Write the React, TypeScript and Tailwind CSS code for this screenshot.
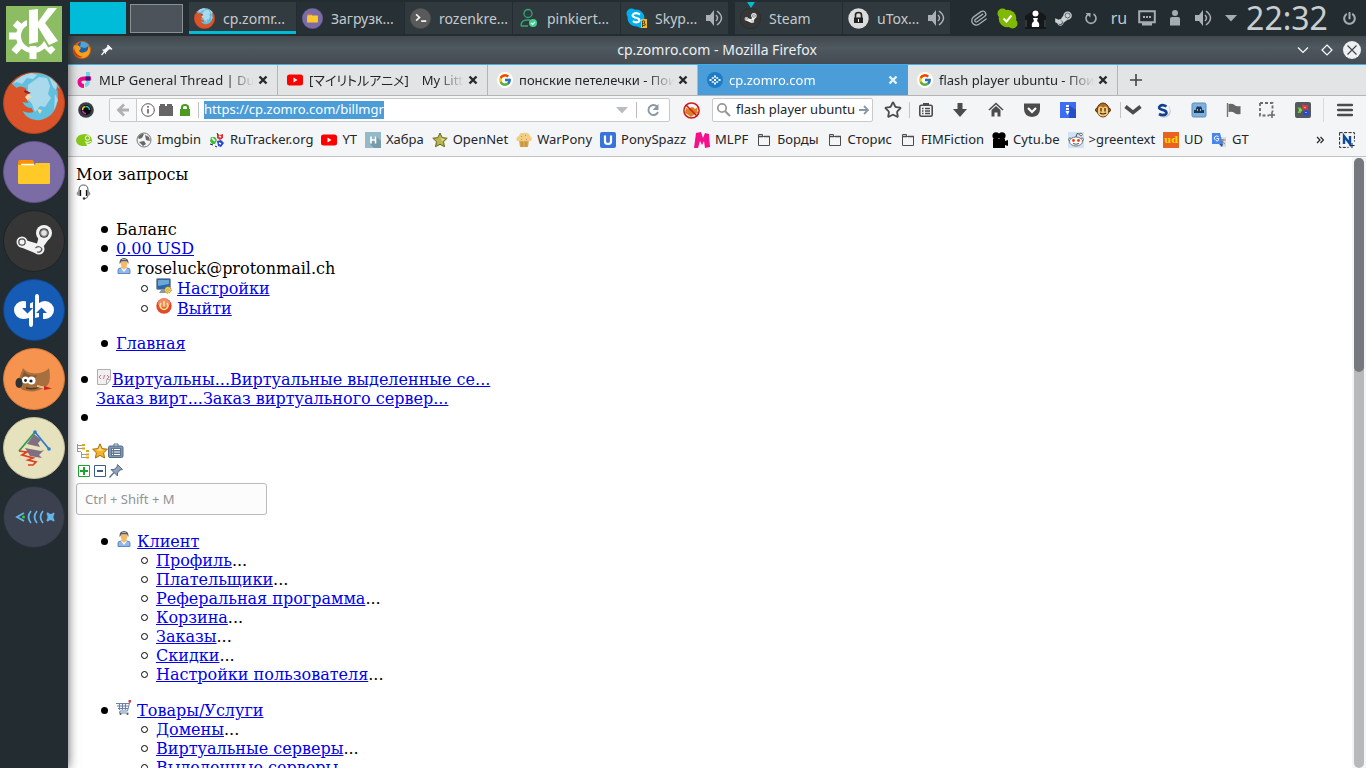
import React from 'react';
import { FaSteamSymbol, FaPowerOff } from 'react-icons/fa';
import { FcGoogle } from 'react-icons/fc';
import { Paperclip, Star } from 'lucide-react';

type SvgProps = { className?: string; box?: string; children: React.ReactNode };

function Svg({ className = 'size-4', box = '0 0 16 16', children }: SvgProps) {
  return (
    <svg className={`${className} shrink-0`} viewBox={box} fill="none" aria-hidden="true">
      {children}
    </svg>
  );
}

/* ---------- Round application icons ---------- */

const discs = {
  firefox: { fill: '#d9542a', edge: '#b8431f' },
  files: { fill: '#7c6ca6', edge: '#63558a' },
  steam: { fill: '#363636', edge: '#222222' },
  qbit: { fill: '#165cb5', edge: '#0f458b' },
  gimp: { fill: '#f6934f', edge: '#d2763a' },
  maps: { fill: '#e6e2bd', edge: '#c3bf99' },
  fish: { fill: '#3b414e', edge: '#2a2f3a' },
  terminal: { fill: '#5a5a5a', edge: '#444444' },
};

type Disc = keyof typeof discs;

function SteamMark({ color }: { color: string }) {
  return (
    <>
      <path d="M17 28.500l17 5 3-11 10 5-8 11-6 5-17-7z" fill={color} />
      <circle cx="41" cy="23" r="8" fill={color} />
      <circle cx="41" cy="23" r="4.800" fill="#363636" />
      <circle cx="41" cy="23" r="3.600" fill={color} />
      <circle cx="41" cy="23" r="3.400" fill="#e4e4e4" stroke="#555" strokeWidth=".8" />
      <circle cx="19" cy="32" r="5.500" fill={color} />
      <circle cx="19" cy="32" r="3.200" stroke="#444" strokeWidth="1.200" />
      <circle cx="36" cy="39" r="5.500" fill={color} />
      <path d="M32.500 38q4-3 6.500 1-1 4-5 3" stroke="#555" strokeWidth="1.200" />
    </>
  );
}

function AppDisc({ kind, className = 'size-[62px]' }: { kind: Disc; className?: string }) {
  const { fill, edge } = discs[kind];
  return (
    <Svg className={className} box="0 0 62 62">
      <circle cx="31" cy="31" r="30.500" fill={fill} stroke={edge} />
      {kind === 'firefox' && (
        <>
          <path
            d="M9 12Q18 1 32 1q17 0 25 16l-3-2-.500 4 1-1q2 18-8 26-7 5-14 4-9-1-13-9 6 3 11 1l-2-4q-6 0-9-6l6 1q-2-3 0-6l-3-9q-6-3-9 0z"
            fill="#62c0df"
          />
          <path d="M9 12Q18 2 29 1l5 2-4 4-6-1-5 6-5-2zM25 13l11-8 8 1 3 8-2 8 3 4-6 9-5-1-5 6-3-8-4-5z" fill="#a9d9eb" />
          <path d="m46 5 8 7-1 6-3-3zM52 22l3 6-4 10z" fill="#a9d9eb" />
          <path d="m25 22 4 3-3 1-1 3-3-4zM34 37l5 1-2 4z" fill="#f6d9ac" />
          <path d="m22 18 6 3-3 1-4-2z" fill="#9c1c1c" />
        </>
      )}
      {kind === 'files' && (
        <>
          <path d="M15 22q0-3 2-3h12q2 0 2 3v3H15z" fill="#ff8f00" />
          <path d="M15 24h16l2-2h13q1 0 1 1v19q0 1-1 1H16q-1 0-1-1z" fill="#ffca28" />
          <path d="M18 23.5h13" stroke="#fff" strokeWidth="1.5" />
        </>
      )}
      {kind === 'steam' && <SteamMark color="#f2f2f2" />}
      {kind === 'qbit' && (
        <>
          <path d="M30 23v22q0 3-2 3t-2-3v-6q-3 1-6 1a9 9 0 0 1 0-18q5 0 6 3z" fill="#fff" />
          <path d="M32 39V18q0-3 2-3t2 3v6q3-2 6-2a9 9 0 0 1 0 18q-5 0-6-2z" fill="#fff" />
          <path d="M23 22v7h-4l5.500 5.500L30 29h-3v-7zM36 40v-6h-3l5.500-5.500L44 34h-4v6z" fill="#165cb5" />
        </>
      )}
      {kind === 'gimp' && (
        <>
          <path d="M20 20q5 7 17 5 7-2 9-5 3 16-4 19-10 7-22 3-7-4-5-9z" fill="#a66f3d" />
          <path d="M21 23q4 6 13 4l-4 7-11-4z" fill="#85552b" />
          <ellipse cx="16" cy="35" rx="3.500" ry="5" fill="#2d3234" />
          <circle cx="22.500" cy="32" r="3.500" fill="#fff" />
          <circle cx="28.500" cy="32.500" r="4" fill="#fff" />
          <circle cx="22.500" cy="32.500" r="1.400" fill="#222" />
          <circle cx="28" cy="33" r="1.600" fill="#222" />
          <path d="M23 40q9 2 15-2" stroke="#503722" strokeWidth="1.500" />
          <path d="m34 38 9 2" stroke="#e7c088" strokeWidth="2" />
          <path d="m41 38 8 2.500-8 1.500z" fill="#cf2323" />
        </>
      )}
      {kind === 'maps' && (
        <>
          <path d="m31 17 7 6-3 3 2 4-13-3zM22 31l16 3 3-1-5 5 3 3-12-2z" fill="#806f80" />
          <path d="m16 34 16-19" stroke="#2e9c4e" strokeWidth="1.800" />
          <path d="m32 15 14 17" stroke="#3079ce" strokeWidth="1.800" />
          <circle cx="32" cy="15" r="1.800" fill="#3079ce" />
          <circle cx="46" cy="32" r="1.800" fill="#3079ce" />
          <path d="m16 34 8 1-5 3 11 3-5 2 8 2-3 3h-5" stroke="#df3d24" strokeWidth="1.700" />
        </>
      )}
      {kind === 'fish' && (
        <g stroke="#62b6ec" strokeWidth="1.800">
          <path d="m21 27-7 4 7 4M28 25q-5 6 0 12M34 25q-5 6 0 12M40 25q-5 6 0 12M44 27q4 4 7 0M44 35q4-4 7 0M44 27q3 4 0 8M51 27q-3 4 0 8M45 28l5 6M50 28l-5 6" />
          <circle cx="20.500" cy="31" r="1.500" fill="#3c3" stroke="none" />
        </g>
      )}
      {kind === 'terminal' && <path d="m18 19 10 9-10 9M33 39h15" stroke="#f1f1f1" strokeWidth="5" />}
    </Svg>
  );
}

/* ---------- Task and tray glyphs ---------- */

function Speaker() {
  return (
    <Svg className="size-[18px]" box="0 0 18 18">
      <path d="M1 6h4l4-5v16l-4-5H1z" fill="#a9b1b5" />
      <path d="M11 6q3 3 0 6M12 2q9 7 0 14" stroke="#a9b1b5" strokeWidth="1.500" />
    </Svg>
  );
}

function ContactIcon() {
  return (
    <Svg className="size-[21px]" box="0 0 21 21">
      <circle cx="10" cy="5.500" r="4" stroke="#35a876" strokeWidth="1.300" />
      <path d="M3 18q0-6 6-6h3M3 18h7" stroke="#35a876" strokeWidth="1.300" />
      <circle cx="15" cy="15" r="4" fill="#3fcf90" />
      <path d="m13 15 1.500 1.500L17 14" stroke="#fff" strokeWidth="1.200" />
    </Svg>
  );
}

function SkypeIcon() {
  return (
    <Svg className="size-[21px]" box="0 0 21 21">
      <circle cx="10" cy="10" r="8.500" fill="#00aff0" />
      <circle cx="5.500" cy="5.500" r="5" fill="#00aff0" />
      <circle cx="15" cy="15" r="5" fill="#00aff0" />
      <path d="M14 6.500Q10 4 7.500 6T9 9.500l3 1q3 2 0 3.500-3 1-5-1" stroke="#fff" strokeWidth="2.200" />
      <path d="M15 11h6v9h-6z" fill="#f4b927" />
      <path d="M16.500 19v-6q2-1 2.500 1l-1.500 1.500q3 0 1.500 2h-2" stroke="#664400" />
    </Svg>
  );
}

function UToxIcon() {
  return (
    <Svg className="size-[21px]" box="0 0 21 21">
      <circle cx="10.500" cy="10.500" r="10.200" fill="#dcdcdc" />
      <path d="M6 9.500h9V15H6z" fill="#222" />
      <path d="M7.500 10V7q0-2.500 3-2.500t3 2.500v3" stroke="#222" strokeWidth="1.600" />
      <path d="M10.500 11v3" stroke="#fff" />
    </Svg>
  );
}

type Task = { label: string; icon: React.ReactNode; tone: string; audio?: boolean; active?: boolean; marked?: boolean };

const windows: Task[] = [
  { label: 'cp.zomr...', icon: <AppDisc kind="firefox" className="size-[21px]" />, tone: 'bg-[#323b40]', active: true },
  { label: 'Загрузк...', icon: <AppDisc kind="files" className="size-[21px]" />, tone: 'bg-[#273135]' },
  { label: 'rozenkre...', icon: <AppDisc kind="terminal" className="size-[21px]" />, tone: 'bg-[#30393e]' },
  { label: 'pinkiert...', icon: <ContactIcon />, tone: 'bg-[#30393e]' },
  { label: 'Skyp...', icon: <SkypeIcon />, tone: 'bg-[#30393e]', audio: true },
];

const pinned: Task[] = [
  { label: 'Steam', icon: <AppDisc kind="steam" className="size-[21px]" />, tone: 'bg-[#30393e]', marked: true },
  { label: 'uTox...', icon: <UToxIcon />, tone: 'bg-[#30393e]', audio: true },
];

function TaskButton({ task }: { task: Task }) {
  return (
    <button
      className={`relative flex h-8 w-[107px] shrink-0 items-center gap-2 px-[5px] text-[14px] whitespace-nowrap text-[#c5cacc] ${task.tone}`}
    >
      {task.icon}
      <span className="flex-1 text-left">{task.label}</span>
      {task.audio && <Speaker />}
      {task.active && <span className="absolute inset-x-0 bottom-0 h-[3px] bg-[#00bcd4]" />}
      {task.marked && (
        <Svg className="absolute top-0 left-3 h-[6px] w-2" box="0 0 8 6">
          <path d="M0 0h8L4 6z" fill="#00bcd4" />
        </Svg>
      )}
    </button>
  );
}

const tray: { name: string; icon: React.ReactNode }[] = [
  { name: 'Clipboard', icon: <Paperclip className="size-[18px] rotate-[10deg] text-[#a5adb1]" strokeWidth={1.8} /> },
  {
    name: 'Skype status',
    icon: (
      <Svg className="size-[21px]" box="0 0 21 21">
        <circle cx="10.500" cy="10.500" r="8.800" fill="#7fba00" />
        <circle cx="5.500" cy="5.500" r="5" fill="#7fba00" />
        <circle cx="15.500" cy="15.500" r="5" fill="#7fba00" />
        <path d="m6.500 10.500 3 3 5-6" stroke="#fff" strokeWidth="2" />
      </Svg>
    ),
  },
  {
    name: 'Messenger',
    icon: (
      <Svg className="size-[21px]" box="0 0 21 21">
        <path d="M0 8q4-3 6-4 4-5 9 0 3 1 6 4v13H0z" fill="#14181a" />
        <circle cx="10.500" cy="5.500" r="3" fill="#fff" />
        <path d="M8 10h5l-1 3q3 2 2 6H7q-1-4 2-6z" fill="#fff" />
        <path d="M1 12v7M20 12v7" stroke="#555" />
      </Svg>
    ),
  },
  { name: 'Steam', icon: <FaSteamSymbol className="size-[19px] text-[#cdd1d3]" /> },
  {
    name: 'Updates',
    icon: (
      <Svg className="size-[14px]" box="0 0 14 14">
        <path d="M9.500 3a5 5 0 1 1-5 0" stroke="#a5adb1" strokeWidth="1.600" />
        <path d="M1.500 2h5v4.500z" fill="#a5adb1" />
      </Svg>
    ),
  },
  { name: 'Layout', icon: <span className="text-[16px] text-[#c5cacc]">ru</span> },
  {
    name: 'Keyboard',
    icon: (
      <Svg className="size-[18px]" box="0 0 18 18">
        <path d="M1.200 2.200h15.600v11H1.200z" stroke="#a5adb1" strokeWidth="2" />
        <path d="M4 14h10v2.500H4zM5 7h2v2H5zM8 7h2v2H8zM11 7h2v2h-2z" fill="#a5adb1" />
      </Svg>
    ),
  },
  {
    name: 'User',
    icon: (
      <Svg className="size-[18px]" box="0 0 18 18">
        <circle cx="9" cy="4" r="3" fill="#a5adb1" />
        <path d="M4 16.500V9.500q0-1.500 2-1.500h6q2 0 2 1.500v7z" fill="#a5adb1" />
      </Svg>
    ),
  },
  { name: 'Volume', icon: <Speaker /> },
  {
    name: 'More',
    icon: (
      <Svg className="h-[7px] w-3" box="0 0 12 7">
        <path d="M0 0h12L6 6.500z" fill="#a5adb1" />
      </Svg>
    ),
  },
];

function Taskbar() {
  return (
    <header className="relative z-20 flex h-9 shrink-0 items-center bg-[#232d31] pl-[2px]">
      <button aria-label="Desktop 1" className="h-8 w-14 shrink-0 bg-[#00bcd9]" />
      <button aria-label="Desktop 2" className="ml-1 h-[29px] w-[53px] shrink-0 border border-[#8b9095] bg-[#4d535b]" />
      <nav className="ml-[6px] flex gap-px">
        {windows.map((t) => (
          <TaskButton key={t.label} task={t} />
        ))}
      </nav>
      <nav className="ml-[7px] flex gap-px">
        {pinned.map((t) => (
          <TaskButton key={t.label} task={t} />
        ))}
      </nav>
      <div className="ml-auto flex items-center">
        {tray.map((t) => (
          <button key={t.name} aria-label={t.name} className="flex h-8 w-7 items-center justify-center">
            {t.icon}
          </button>
        ))}
        <time className="w-[84px] text-center text-[32px] leading-9 text-[#c9ced1]">22:32</time>
        <button aria-label="Power" className="mr-2 ml-[11px] flex size-[18px] items-center justify-center text-[#a5adb1]">
          <FaPowerOff className="size-[13px]" />
        </button>
      </div>
    </header>
  );
}

function Dock() {
  const apps: Disc[] = ['firefox', 'files', 'steam', 'qbit', 'gimp', 'maps', 'fish'];
  return (
    <aside className="z-10 flex w-[68px] shrink-0 flex-col items-center bg-[#232d31] pt-[6px] shadow-[0_0_10px_rgba(0,0,0,0.65)]">
      <button aria-label="KDE" className="mb-[10px] flex size-14 shrink-0 items-center justify-center bg-[#8cbd62]">
        <Svg className="size-14" box="0 0 56 56">
          <path d="M27 40v13M15 38l-7 8M39 38l8 8M13 30H3M15 22l-6-5" stroke="#fff" strokeWidth="7" />
          <circle cx="27" cy="30" r="14.500" stroke="#fff" strokeWidth="5" />
          <path d="M23 4l9-1v13L42 2h9L39 17l13 18-9 4-11-18v15l-9 2z" fill="#8cbd62" stroke="#8cbd62" strokeWidth="4" />
          <path d="M23 4l9-1v13L42 2h9L39 17l13 18-9 4-11-18v15l-9 2z" fill="#fff" />
        </Svg>
      </button>
      <nav className="flex flex-col gap-[7px]">
        {apps.map((a) => (
          <button key={a} aria-label={a}>
            <AppDisc kind={a} />
          </button>
        ))}
      </nav>
    </aside>
  );
}

/* ---------- Firefox window ---------- */

function TitleBar() {
  return (
    <div className="grid h-7 shrink-0 grid-cols-[1fr_auto_1fr] items-center bg-linear-to-b from-[#42494f] via-[#4e585f] via-40% to-[#454c53] px-1 text-[#eceff1]">
      <div className="flex items-center gap-2">
        <Svg className="size-5" box="0 0 20 20">
          <circle cx="10" cy="10" r="9" fill="#e66000" />
          <path d="M6 4q5-5 10 1 3 5-1 9-5 2-8-2z" fill="#1e5fa8" />
          <path d="M9 2q5-1 8 4l-4 2-5-1z" fill="#4fa3dc" />
          <path d="M2 5q2 1 3 0l2 1 2 2-2 3q2 3 6 1 4-1 3-6l2 3q0 8-7 9Q1 18 1 9z" fill="#f9a01b" />
          <path d="M2 8q1 7 9 9-8 2-10-6z" fill="#d33f12" />
        </Svg>
        <button aria-label="Keep above">
          <Svg className="size-[14px]" box="0 0 14 14">
            <path d="m8 2 4 4-3 .6-3 3 0 2-4-5h2l3-2.500z" fill="#f4f6f7" />
            <path d="m5 8-3.500 4M7.500 2l4.500 4.500" stroke="#f4f6f7" strokeWidth="1.300" />
          </Svg>
        </button>
      </div>
      <h1 className="text-[14px] leading-5">cp.zomro.com - Mozilla Firefox</h1>
      <div className="flex items-center justify-end gap-[6px]">
        <button aria-label="Minimize">
          <Svg className="size-[18px]" box="0 0 18 18">
            <path d="m4 6.500 5 5 5-5" stroke="#fff" strokeWidth="1.200" />
          </Svg>
        </button>
        <button aria-label="Maximize">
          <Svg className="size-[18px]" box="0 0 18 18">
            <path d="m9 4 5 5-5 5-5-5z" stroke="#fff" strokeWidth="1.200" />
          </Svg>
        </button>
        <button aria-label="Close">
          <Svg className="size-5" box="0 0 20 20">
            <circle cx="10" cy="10" r="9" fill="#eff0f1" />
            <path d="m5.500 5.500 9 9m0-9-9 9" stroke="#3f474d" strokeWidth="1.200" />
          </Svg>
        </button>
      </div>
    </div>
  );
}

function GoogleBadge() {
  return (
    <span className="flex size-4 shrink-0 items-center justify-center rounded-full bg-white">
      <FcGoogle className="size-[14px]" />
    </span>
  );
}

function YoutubeBadge() {
  return (
    <Svg>
      <rect x="0" y="2.500" width="16" height="11" rx="2.500" fill="#f00" />
      <path d="m6.500 5.500 4 2.500-4 2.500z" fill="#fff" />
    </Svg>
  );
}

const tabs: { title: string; icon: React.ReactNode; active?: boolean }[] = [
  {
    title: 'MLP General Thread | Dubs',
    icon: (
      <Svg>
        <path d="M9 0h4v5H9z" fill="#6fd2e6" />
        <path d="M11 4v6q0 3-3 3" stroke="#6fd2e6" strokeWidth="3.500" />
        <path d="M14 6.500H7Q2 7 2.500 10.500T7 14" stroke="#ec0a8c" strokeWidth="4" />
        <path d="M8.500 4.500H13v4H8.500z" fill="#46127a" />
      </Svg>
    ),
  },
  { title: '[マイリトルアニメ]\u3000My Little Pony', icon: <YoutubeBadge /> },
  { title: 'понские петелечки - Поиск', icon: <GoogleBadge /> },
  {
    title: 'cp.zomro.com',
    active: true,
    icon: (
      <Svg>
        <circle cx="8" cy="8" r="8" fill="#1e7cc4" />
        <path d="M7 3.500h2v2H7zM7 10.500h2v2H7zM2.500 7h2v2h-2zM11.500 7h2v2h-2zM7 7h2v2H7zM4.800 5.200h2v1.500h-2zM9.200 5.200h2v1.500h-2zM4.800 9.300h2v1.500h-2zM9.200 9.300h2v1.500h-2z" fill="#fff" />
      </Svg>
    ),
  },
  { title: 'flash player ubuntu - Поиск', icon: <GoogleBadge /> },
];

function TabStrip() {
  return (
    <div className="flex h-[32px] shrink-0 border-t border-b border-t-[#3daee9] border-b-[#b4b5b6] bg-[#e3e4e6]">
      {tabs.map((tab) => (
        <div
          key={tab.title}
          className={`flex min-w-0 basis-[210px] items-center border-r pr-[9px] pl-[9px] ${
            tab.active ? 'border-r-[#4a9dd9] bg-[#4a9dd9] text-white' : 'border-r-[#b4b5b6] text-[#232629]'
          }`}
        >
          {tab.icon}
          <button className="ml-[6px] min-w-0 flex-1 overflow-hidden text-left text-[13px] leading-5 whitespace-nowrap [font-feature-settings:'palt'] [mask-image:linear-gradient(to_right,black_83%,transparent)]">
            {tab.title}
          </button>
          <button aria-label={`Close ${tab.title}`} className="ml-1">
            <Svg className="size-[10px]" box="0 0 10 10">
              <path d="m1.500 1.500 7 7m0-7-7 7" stroke={tab.active ? '#e6f2fb' : '#26292c'} strokeWidth="2.400" />
            </Svg>
          </button>
        </div>
      ))}
      <button aria-label="New tab" className="flex w-9 items-center justify-center">
        <Svg className="size-3" box="0 0 12 12">
          <path d="M6 0v12M0 6h12" stroke="#444" strokeWidth="1.600" />
        </Svg>
      </button>
    </div>
  );
}

const dark = '#4c4c4c';

function ToolButton({ label, className = 'w-9', children }: { label: string; className?: string; children: React.ReactNode }) {
  return (
    <button aria-label={label} className={`flex h-6 shrink-0 items-center justify-center ${className}`}>
      {children}
    </button>
  );
}

function NavBar() {
  return (
    <div className="flex h-7 shrink-0 items-center bg-[#f4f5f7]">
      <ToolButton label="Camera" className="mr-[5px] w-9">
        <Svg>
          <circle cx="8" cy="8" r="7.800" fill="#3a3e42" />
          <circle cx="8" cy="8" r="5" fill="#0b0b0d" />
          <path d="M4.500 8a3.500 3.500 0 0 1 3-3.500" stroke="#e0d030" strokeWidth="1.500" />
          <path d="M8 4.500A3.500 3.500 0 0 1 11.500 8" stroke="#27c4c8" strokeWidth="1.500" />
          <path d="M4.500 8.500A3.500 3.500 0 0 0 8 11.500" stroke="#d02ccc" strokeWidth="1.500" />
        </Svg>
      </ToolButton>
      <div className="flex h-6 flex-1 items-center rounded-xs border border-[#c8c9cb] bg-white">
        <button aria-label="Back" className="flex h-full w-[27px] items-center justify-center border-r border-[#c8c9cb] bg-[#f7f8f9]">
          <Svg className="size-[14px]" box="0 0 14 14">
            <path d="M13 7H3M8 1.500 2.500 7 8 12.500" stroke="#b0b0b0" strokeWidth="2.800" />
          </Svg>
        </button>
        <button aria-label="Site information" className="ml-1 flex items-center gap-[3px]">
          <Svg className="size-[14px]" box="0 0 14 14">
            <circle cx="7" cy="7" r="6.300" stroke="#555" />
            <path d="M7 6v4.500M7 3v1.700" stroke="#555" strokeWidth="1.500" />
          </Svg>
          <Svg>
            <path d="M1 4h1V2h5v2h2V2h5v2h1v10H1z" fill="#666" />
          </Svg>
          <Svg>
            <path d="M3 7h10v7H3z" fill="#4b9a22" />
            <path d="M5 8V5.500Q5 3 8 3t3 2.500V8" stroke="#4b9a22" strokeWidth="2.200" />
          </Svg>
        </button>
        <span className="mx-[5px] h-4 w-px bg-[#c0c0c0]" />
        <input
          aria-label="Address"
          defaultValue="https://cp.zomro.com/billmgr"
          className="field-sizing-content h-[18px] bg-[#4a9dd9] text-[13px] text-white outline-none"
        />
        <button aria-label="Show history" className="ml-auto px-2">
          <Svg className="h-[7px] w-3" box="0 0 12 7">
            <path d="M0 0h12L6 6.500z" fill="#b9bcbf" />
          </Svg>
        </button>
        <span className="h-4 w-px bg-[#bcbcbc]" />
        <button aria-label="Reload" className="flex w-8 justify-center">
          <Svg className="size-[14px]" box="0 0 14 14">
            <path d="M11 3.500A5 5 0 1 0 12 9" stroke="#8a98a5" strokeWidth="1.900" />
            <path d="M12.500 1v6h-6z" fill="#8a98a5" />
          </Svg>
        </button>
      </div>
      <ToolButton label="Block content" className="w-[42px]">
        <Svg className="size-[17px]" box="0 0 17 17">
          <path d="m3 6 3 1q3-4 6 0l3-2-1 4 2 2-4 1-4 3-4-3-2-1z" fill="#d88024" />
          <circle cx="8.500" cy="8.500" r="7.600" stroke="#d41818" strokeWidth="1.500" />
          <path d="m3 3 11 11" stroke="#d41818" strokeWidth="1.500" />
        </Svg>
      </ToolButton>
      <div className="flex h-6 w-[161px] shrink-0 items-center rounded-xs border border-[#c8c9cb] bg-white px-[3px]">
        <Svg>
          <circle cx="6" cy="6" r="4.200" stroke="#999" strokeWidth="1.800" />
          <path d="m9 9 5 5" stroke="#999" strokeWidth="2.200" />
        </Svg>
        <input aria-label="Search" defaultValue="flash player ubuntu" className="ml-1 min-w-0 flex-1 bg-transparent text-[13px] text-[#232629] outline-none" />
        <button aria-label="Go">
          <Svg className="size-[10px]" box="0 0 10 10">
            <path d="M0 5h8M5 1l4 4-4 4" stroke="#8a98a5" strokeWidth="1.800" />
          </Svg>
        </button>
      </div>
      <ToolButton label="Bookmark this page" className="ml-1 w-8">
        <Star className="size-[18px]" color={dark} strokeWidth={2.4} />
      </ToolButton>
      <span className="h-4 w-px bg-[#c4c5c7]" />
      <ToolButton label="Bookmarks" className="w-8">
        <Svg>
          <rect x="1.800" y="3.300" width="12.400" height="11" rx="1.500" stroke={dark} strokeWidth="1.600" />
          <path d="M5 1h6v3H5z" fill={dark} />
          <path d="M4 6.500h1.500M7 6.500h5M4 9h1.500M7 9h5M4 11.500h1.500M7 11.500h5" stroke={dark} strokeWidth="1.300" />
        </Svg>
      </ToolButton>
      <ToolButton label="Downloads">
        <Svg>
          <path d="M5.500 1h5v6H15l-7 8-7-8h4.500z" fill={dark} />
        </Svg>
      </ToolButton>
      <ToolButton label="Home">
        <Svg>
          <path d="m1 8 7-6.500L15 8" stroke={dark} strokeWidth="1.600" />
          <path d="m3.500 8 4.500-4 4.500 4v6.500h-3v-4h-3v4h-3z" fill={dark} />
        </Svg>
      </ToolButton>
      <ToolButton label="Pocket">
        <Svg>
          <path d="M0 1.500h16V7q0 7-8 8Q0 14 0 7z" fill={dark} />
          <path d="m4 6 4 4 4-4" stroke="#fff" strokeWidth="2.200" />
        </Svg>
      </ToolButton>
      <ToolButton label="Archive">
        <Svg>
          <path d="M0 0h16v16H0z" fill="#3d6df2" />
          <path d="m9 3 7 5v8H9z" fill="#2850c4" />
          <path d="M6 3h3v2H6zM6 6h3v2H6zM5.500 9h4L7.500 13z" fill="#fff" />
        </Svg>
      </ToolButton>
      <ToolButton label="Monkey" className="w-[34px]">
        <Svg>
          <circle cx="2.500" cy="8" r="2" fill="#c9893b" stroke="#56300f" />
          <circle cx="13.500" cy="8" r="2" fill="#c9893b" stroke="#56300f" />
          <ellipse cx="8" cy="8" rx="6" ry="7" fill="#b06d22" stroke="#56300f" />
          <path d="M3 8q0-4 3-3.500l2 1 2-1q3-.500 3 3.500 1 6-5 6.500Q2 14 3 8z" fill="#f6c777" />
          <path d="M6 6v3.500M10 6v3.500M5 11q3 2 6 0" stroke="#33200f" strokeWidth="1.200" />
        </Svg>
      </ToolButton>
      <span className="h-4 w-px bg-[#c4c5c7]" />
      <ToolButton label="Scripts" className="w-6">
        <Svg className="size-[18px]" box="0 0 18 18">
          <path d="m1.500 5.500 7.500 6 7.500-6" stroke={dark} strokeWidth="3.600" />
        </Svg>
      </ToolButton>
      <ToolButton label="Stylish">
        <Svg>
          <circle cx="9" cy="9" r="6.800" fill="#c3c8ce" />
          <circle cx="8" cy="8" r="6.800" fill="#f2f5f9" />
          <path d="M11.500 4.500Q7.500 2 5 4T6.500 7.500l3 1q3.500 2 1 4-3 1.500-6.500-.500" stroke="#11418e" strokeWidth="2.600" />
        </Svg>
      </ToolButton>
      <ToolButton label="Robot" className="w-[35px]">
        <Svg>
          <rect x="1" y="1" width="14" height="14" rx="1.500" fill="#7fb1de" stroke="#5d8dbc" />
          <path d="M3 11V8h2V6q1-2 3-2t3 2v2h2v3z" fill="#203552" />
          <path d="M6.500 7v2M9.500 7v2M8 3v2" stroke="#8cbce6" />
        </Svg>
      </ToolButton>
      <ToolButton label="Flag" className="w-[35px]">
        <Svg>
          <path d="M1.500 1v14" stroke="#777" strokeWidth="1.400" />
          <path d="M2.500 2q4-1 6 1t6 1v8q-4 1-6-1t-6-1z" fill="#666" />
        </Svg>
      </ToolButton>
      <ToolButton label="Screenshot" className="w-8">
        <Svg>
          <path d="M1 1h12.500v9M1 1v12.500h9" stroke="#6b6b6b" strokeWidth="1.800" strokeDasharray="3 2" />
          <path d="M13 10v6M10 13h6" stroke="#6b6b6b" strokeWidth="1.600" />
        </Svg>
      </ToolButton>
      <ToolButton label="Color nodes" className="w-10">
        <Svg>
          <rect width="16" height="16" rx="2" fill="#55585c" />
          <path d="M2.500 5.500h3l2 2.500-2 3h-3L4 8z" fill="#61ce32" />
          <path d="m8 2 2 1.500 3-.500-.500 3 .500 2-3-.500L8 8 7 5z" fill="#f03447" />
          <path d="m8 10 2-.500 1-2 2 2 1.500.500-1 2-.500 2-2-1-2 1z" fill="#2647dd" />
          <path d="M4.500 8h1M9.500 5.500h1M10.500 10.500h1" stroke="#fff" />
        </Svg>
      </ToolButton>
      <span className="h-6 w-px bg-[#d9dadc]" />
      <ToolButton label="Menu" className="w-[42px]">
        <Svg>
          <path d="M1 3h14M1 8h14M1 13h14" stroke={dark} strokeWidth="2.400" strokeLinecap="round" />
        </Svg>
      </ToolButton>
    </div>
  );
}

function FolderOutline() {
  return (
    <Svg>
      <path d="M2.500 13.500v-11h4v2h7v9z" stroke={dark} />
      <path d="M2 4.500h5M8 4.500h6" stroke={dark} strokeWidth="1.500" />
    </Svg>
  );
}

const bookmarks: { label: string; icon: React.ReactNode }[] = [
  {
    label: 'SUSE',
    icon: (
      <Svg>
        <path d="M0 8q1-6 9-6 7 1 7 7 0 2-3 3l-3-1 1 3H6q-6-1-6-6z" fill="#86c81a" />
        <circle cx="11.500" cy="6" r="2.200" stroke="#fff" />
        <path d="M9 10q3 1 6-.500" stroke="#fff" />
      </Svg>
    ),
  },
  {
    label: 'Imgbin',
    icon: (
      <Svg>
        <circle cx="8" cy="8" r="7" fill="#f3f3f3" stroke="#777" />
        <path d="M2 5q3-4 6-3l-2 4-3 1zM9 3l4 2 1 4-4-1zM3 10l5-1 2 3-3 2z" fill="#686868" />
      </Svg>
    ),
  },
  {
    label: 'RuTracker.org',
    icon: (
      <Svg>
        <path d="M2 5h4l2 3-2 4H3L1 9z" fill="#42b93d" />
        <path d="m8 2 3 1 3-1v4l-3 2-3-2z" fill="#e52a2f" />
        <path d="m8 9 4-1 3 3-3 4-3-1z" fill="#2346d2" />
        <path d="M3 6l3 3M10 4l2 1M10 11l2 1" stroke="#fff" strokeWidth="1.500" />
        <path d="M8 1l1 2M1 12l3 1M6 14l2 1" stroke="#222" />
      </Svg>
    ),
  },
  { label: 'YT', icon: <YoutubeBadge /> },
  {
    label: 'Хабра',
    icon: (
      <Svg>
        <path d="M0 0h16v16H0z" fill="#93bac6" />
        <path d="m11 4 5 5v7H9L5 12z" fill="#789ba9" />
        <path d="M6 4.500v7M10.500 4.500v7M6 8h4" stroke="#fff" strokeWidth="1.600" />
      </Svg>
    ),
  },
  {
    label: 'OpenNet',
    icon: (
      <Svg>
        <path d="m8 1 2.200 4.600 5 .6-3.700 3.500 1 5L8 12.300 3.500 14.700l1-5L.8 6.200l5-.6z" fill="#b8b552" stroke="#66651b" />
        <path d="m8 3 1.500 3.500 3 .5-2.500 2z" fill="#e7e5a0" />
      </Svg>
    ),
  },
  {
    label: 'WarPony',
    icon: (
      <Svg>
        <path d="M3 8h10l-1 7H4z" fill="#d7a54b" />
        <path d="M1 9Q-1 5 3 4q1-4 5-3 5-1 6 3 3 2 1 5z" fill="#f0ce84" />
        <path d="M6 10v5M10 10v5M5 4l1 1M9 3l1 1M10 7l1 1M5 8l1-1" stroke="#b98534" strokeWidth=".8" />
      </Svg>
    ),
  },
  {
    label: 'PonySpazz',
    icon: (
      <Svg>
        <rect width="16" height="16" rx="2" fill="#3b74d8" />
        <path d="M5 3.500v6Q5 12 8 12t3-2.500v-6" stroke="#fff" strokeWidth="2.200" />
      </Svg>
    ),
  },
  {
    label: 'MLPF',
    icon: (
      <Svg>
        <path d="m0 16 2-15 5-1 2 6 2-5 4 1 1 13-5 1-1-7-2 4-2-4-2 7z" fill="#f5108c" />
      </Svg>
    ),
  },
  { label: 'Борды', icon: <FolderOutline /> },
  { label: 'Сторис', icon: <FolderOutline /> },
  { label: 'FIMFiction', icon: <FolderOutline /> },
  {
    label: 'Cytu.be',
    icon: (
      <Svg>
        <circle cx="4" cy="3.800" r="3.600" fill="#000" />
        <circle cx="10" cy="3.800" r="3.600" fill="#000" />
        <path d="M1 7h12v2l3-1v6l-3-1v3H1z" fill="#000" />
      </Svg>
    ),
  },
  {
    label: '>greentext',
    icon: (
      <Svg>
        <path d="M0 0h16v16H0z" fill="#cfe3f7" />
        <path d="m8 5 1-3.500 3 .7" stroke="#555" />
        <circle cx="13" cy="2.500" r="1.300" fill="#fff" stroke="#555" strokeWidth=".8" />
        <circle cx="2" cy="7.500" r="1.500" fill="#fff" stroke="#555" strokeWidth=".8" />
        <circle cx="14" cy="7.500" r="1.500" fill="#fff" stroke="#555" strokeWidth=".8" />
        <ellipse cx="8" cy="9.500" rx="6.500" ry="4.500" fill="#fff" stroke="#555" strokeWidth=".8" />
        <circle cx="5.500" cy="8.500" r="1.400" fill="#f33a16" />
        <circle cx="10.500" cy="8.500" r="1.400" fill="#f33a16" />
        <path d="M5 11.500q3 1.500 6 0" stroke="#555" />
      </Svg>
    ),
  },
  {
    label: 'UD',
    icon: (
      <span
        className="flex size-4 items-center justify-center bg-[#e86222] font-['DejaVu_Serif',serif] text-[10px] leading-4 font-bold text-[#ffd600]"
        aria-hidden="true"
      >
        ud
      </span>
    ),
  },
  {
    label: 'GT',
    icon: (
      <Svg>
        <path d="M7 5h8v10H9z" fill="#dcdcdc" />
        <path d="M1 1h8l3 11H1z" fill="#4a86e8" />
        <path d="M7.500 4.500Q5 3 3.700 5T5 8.500t2.700-2H5.500" stroke="#fff" />
        <path d="M10 8h4.500M12 7v1q0 3-2 4M11 9q1 2 3 3" stroke="#777" strokeWidth=".8" />
        <path d="m8 12 3 3 1-3z" fill="#2457b5" />
      </Svg>
    ),
  },
];

function BookmarksBar() {
  return (
    <nav className="flex h-[33px] shrink-0 items-center border-b border-[#c3c4c5] bg-[#f4f5f7] pr-[11px] pl-2 text-[13px] text-[#232629]">
      <div className="flex flex-1 gap-2">
        {bookmarks.map((b) => (
          <a key={b.label} href="#" className="flex items-center gap-[5px] whitespace-nowrap">
            {b.icon}
            {b.label}
          </a>
        ))}
      </div>
      <button aria-label="More bookmarks" className="mr-[15px]">
        <Svg className="size-2" box="0 0 8 8">
          <path d="m1 1 3 3-3 3M4.500 1l3 3-3 3" stroke="#222" strokeWidth="1.200" />
        </Svg>
      </button>
      <button aria-label="Capture">
        <Svg>
          <path d="M.6.600h14.800v9M.6.600v14.800h9" stroke="#222" strokeDasharray="3 1.500" />
          <path d="M13 11v5M10.500 13.500h5" stroke="#222" />
          <path d="M5 12V4l6 8V4" stroke="#0e4a9c" strokeWidth="2.400" />
        </Svg>
      </button>
    </nav>
  );
}

/* ---------- Page content ---------- */

const inlineIcon = 'inline size-4 align-baseline';

function PersonIcon() {
  return (
    <Svg className={inlineIcon}>
      <path d="M2 15.500V12q0-2 3-2h6q3 0 3 2v3.500z" fill="#8fb8ea" stroke="#4a76b4" strokeWidth=".8" />
      <path d="m5 10 3 4 3-4z" fill="#fff" />
      <path d="M4.500 4h7q0 5-3.500 8-3.500-3-3.500-8z" fill="#f8b864" />
      <path d="M3.500 6Q3 0 8 0q5 0 4.500 6L11 3.500H5.500z" fill="#5c5c5c" />
      <path d="M6 1.500h4" stroke="#aaa" />
    </Svg>
  );
}

function HeadsetIcon() {
  return (
    <Svg className={inlineIcon}>
      <path d="M3 8V6Q3 1 7.500 1T12 6v2" stroke="#555" />
      <path d="M4 6v6Q1 12 .5 9.500 1 7 4 6zM11 6v6q3 0 3.500-2.500Q14 7 11 6z" fill="#99949c" />
      <path d="M4.500 6v6M10.500 6v6" stroke="#111" strokeWidth="1.300" />
      <path d="M12 12q-1 2.500-3 2.500" stroke="#555" />
      <circle cx="8" cy="14.500" r="1.200" fill="#333" />
    </Svg>
  );
}

function MonitorIcon() {
  return (
    <Svg className={inlineIcon}>
      <rect x=".5" y=".5" width="14" height="11" rx="1" fill="#2a67a8" stroke="#8a9aac" />
      <path d="M2 2h11v4L2 8z" fill="#6ba6d9" />
      <path d="M5 12h5l1 3H3z" fill="#8a97a5" />
      <circle cx="12" cy="12" r="3.200" fill="#f7d860" stroke="#a87d14" strokeDasharray="1.500 1" />
      <circle cx="12" cy="12" r="1.200" fill="#fff" stroke="#a87d14" strokeWidth=".7" />
    </Svg>
  );
}

function ExitIcon() {
  return (
    <Svg className={inlineIcon}>
      <circle cx="8" cy="8" r="7.700" fill="#e04a2a" />
      <ellipse cx="8" cy="5" rx="6" ry="4.500" fill="#f08a68" />
      <path d="M5 5q-2 3 0 5 3 3 6 0 2-2 0-5M8 3v5.500" stroke="#ffe98a" strokeWidth="1.500" />
    </Svg>
  );
}

function CodePageIcon() {
  return (
    <Svg className={inlineIcon}>
      <path d="M1.500.5h13v10l-4 5h-9z" fill="#f0f0f0" stroke="#b0b0b0" />
      <path d="M14.500 10.500h-4v5z" fill="#fff" stroke="#b0b0b0" />
      <path d="M5 6 3 8l2 2M8.500 6l-1 4M11 6l2 2-2 2" stroke="#e8688c" />
    </Svg>
  );
}

function CartIcon() {
  return (
    <Svg className={inlineIcon}>
      <path d="M0 3.500h13M1 6h11.500M2 8.500h10M3.500 3v7M6.500 3v7M9.500 3v7" stroke="#6b83a6" strokeWidth="1.200" />
      <path d="m14 1-2.500 10H4l-.5 2h9" stroke="#6b83a6" />
      <path d="M12.500 0H15v2.500h-2.500z" fill="#dd3c3c" />
      <circle cx="4.500" cy="14" r="1" fill="#555" />
      <circle cx="11.500" cy="14" r="1" fill="#555" />
    </Svg>
  );
}

function Link({ children }: { children: React.ReactNode }) {
  return (
    <a href="#" className="text-[#0000ee] underline">
      {children}
    </a>
  );
}

function Item({ children, hollow }: { children?: React.ReactNode; hollow?: boolean }) {
  return (
    <li
      className={
        hollow
          ? "before:mr-2 before:-ml-[15px] before:inline-block before:size-[7px] before:rounded-full before:border before:border-black before:align-[2px] before:content-['']"
          : "before:mr-2 before:-ml-[15px] before:inline-block before:size-[7px] before:rounded-full before:bg-black before:align-[2px] before:content-['']"
      }
    >
      {children}
    </li>
  );
}

const clientLinks = ['Профиль', 'Плательщики', 'Реферальная программа', 'Корзина', 'Заказы', 'Скидки', 'Настройки пользователя'];
const productLinks = ['Домены', 'Виртуальные серверы', 'Выделенные серверы'];

function SubMenu({ items }: { items: string[] }) {
  return (
    <ul className="pl-10">
      {items.map((item) => (
        <Item key={item} hollow>
          <Link>{item}</Link>...
        </Item>
      ))}
    </ul>
  );
}

function ImageButton({ label, children }: { label: string; children: React.ReactNode }) {
  return (
    <button aria-label={label} className="size-4">
      <Svg>{children}</Svg>
    </button>
  );
}

function Page() {
  return (
    <main className="min-w-0 flex-1 overflow-hidden bg-white p-2 font-['DejaVu_Serif',serif] text-[16px] leading-[19px] text-black">
      <div>Мои запросы</div>
      <div>
        <HeadsetIcon />
      </div>
      <ul className="mt-4 pl-10">
        <Item>Баланс</Item>
        <Item>
          <Link>0.00 USD</Link>
        </Item>
        <Item>
          <PersonIcon /> roseluck@protonmail.ch
          <ul className="pl-10">
            <Item hollow>
              <MonitorIcon /> <Link>Настройки</Link>
            </Item>
            <Item hollow>
              <ExitIcon /> <Link>Выйти</Link>
            </Item>
          </ul>
        </Item>
      </ul>
      <ul className="mt-4 pl-10">
        <Item>
          <Link>Главная</Link>
        </Item>
      </ul>
      <ul className="mt-4 pl-5">
        <Item>
          <CodePageIcon />
          <Link>Виртуальны...Виртуальные выделенные се...</Link>
          <br />
          <Link>Заказ вирт...Заказ виртуального сервер...</Link>
        </Item>
        <Item />
      </ul>
      <div className="mt-4 flex h-5 items-start">
        <ImageButton label="Tree">
          <path d="M1.500 1v8M1 2.500h5M1 5.500h5M1 8.500h4M5.500 9v6M5 11.500h5M5 14.500h5" stroke="#999" />
          <path d="M6 1h3v2H6zM6 4.500h3v2H6zM10 7h3v2h-3zM10 10.500h3v2h-3zM10 13.500h3v2h-3z" fill="#dba617" />
        </ImageButton>
        <ImageButton label="Favorites">
          <path d="m8 .8 2.200 4.800 5.200.6-3.800 3.600 1 5.200L8 12.400 3.400 15l1-5.200L.6 6.200l5.200-.6z" fill="#f4b429" stroke="#a86e0c" />
          <path d="m8 3 1.300 3.500L12 7 8 8 4 7l3-.7z" fill="#fbe08a" />
        </ImageButton>
        <ImageButton label="Clipboard">
          <path d="M6 3V1h4v2" stroke="#566b88" />
          <rect x=".5" y="3" width="14.500" height="11.500" rx="1.500" fill="#8195b0" stroke="#566b88" />
          <path d="M3 5h10v8H3z" fill="#5e7593" />
          <path d="M4 6.500h1M6 6.500h6M4 9h1M6 9h6M4 11.500h1M6 11.500h6" stroke="#fff" />
        </ImageButton>
      </div>
      <div className="flex h-5 items-start">
        <ImageButton label="Expand all">
          <path d="M2.500 2.500h11v11h-11z" fill="#fff" stroke="#1ea32b" />
          <path d="M8 4v8M4 8h8" stroke="#1ea32b" strokeWidth="2" />
        </ImageButton>
        <ImageButton label="Collapse all">
          <path d="M2.500 2.500h11v11h-11z" fill="#fff" stroke="#3c5b8e" />
          <path d="M5 8h6" stroke="#3c5b8e" strokeWidth="2" />
        </ImageButton>
        <ImageButton label="Pin">
          <path d="m9.500 1.500 5 5-2.500.5-2.500 3 0 3-6.500-6.500h3l3-2.500z" fill="#8fa1b8" stroke="#5b6e88" />
          <path d="m6 9.500-4.500 5" stroke="#5b6e88" strokeWidth="1.300" />
        </ImageButton>
      </div>
      <input
        type="text"
        aria-label="Menu filter"
        placeholder="Ctrl + Shift + M"
        className="block h-8 w-[191px] rounded-[3px] border border-[#b9babb] bg-[#fcfcfc] px-2 font-['Noto_Sans',sans-serif] text-[13px] placeholder:text-[#929394]"
      />
      <ul className="mt-4 flex flex-col gap-4 pl-10">
        <Item>
          <PersonIcon /> <Link>Клиент</Link>
          <SubMenu items={clientLinks} />
        </Item>
        <Item>
          <CartIcon /> <Link>Товары/Услуги</Link>
          <SubMenu items={productLinks} />
        </Item>
      </ul>
    </main>
  );
}

export default function App() {
  return (
    <div className="flex h-screen w-full overflow-hidden font-['Noto_Sans','Noto_Sans_CJK_JP',sans-serif]">
      <Dock />
      <div className="flex min-w-0 flex-1 flex-col">
        <Taskbar />
        <TitleBar />
        <TabStrip />
        <NavBar />
        <BookmarksBar />
        <div className="flex min-h-0 flex-1">
          <Page />
          <div className="flex w-[14px] shrink-0 bg-[#f4f5f6] px-[2px] pt-px">
            <div className="flex flex-1 rounded-full bg-[#b8b9bb]">
              <div className="h-[35%] flex-1 rounded-full bg-[#75797d]" />
            </div>
          </div>
        </div>
      </div>
    </div>
  );
}
